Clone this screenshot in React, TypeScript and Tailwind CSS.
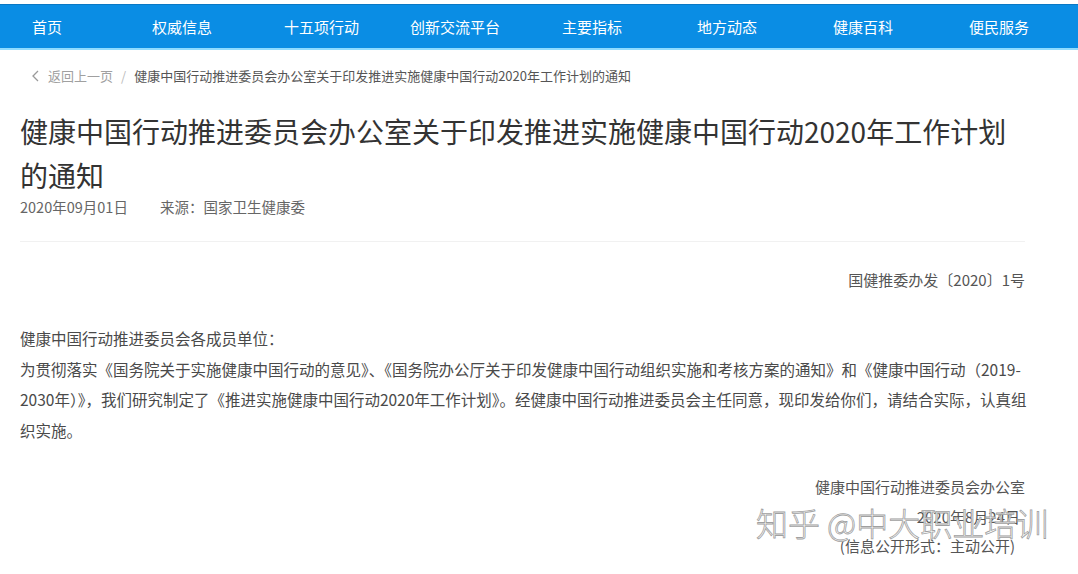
const navItems = [
    { label: '首页', cls: 'ml-[32px]' },
    { label: '权威信息', cls: 'ml-[90px]' },
    { label: '十五项行动', cls: 'ml-[72px]' },
    { label: '创新交流平台', cls: 'ml-[51px]' },
    { label: '主要指标', cls: 'ml-[62px]' },
    { label: '地方动态', cls: 'ml-[75px]' },
    { label: '健康百科', cls: 'ml-[76px]' },
    { label: '便民服务', cls: 'ml-[76px]' },
];

const font = "font-['Noto_Sans_CJK_SC','Noto_Sans',sans-serif]";

const NavBar = () => {
    return (
        <div className="w-full pt-[4px] bg-white">
            <nav className="flex flex-row items-center h-[46px] bg-[#0a8de4] border-t border-[#0a78c4] border-b-2 border-b-[#8fdcff]">
                {navItems.map((item) => (
                    <a key={item.label} href="#" className={`${item.cls} text-white text-[15px] leading-none whitespace-nowrap`}>
                        {item.label}
                    </a>
                ))}
            </nav>
        </div>
    );
};

const Breadcrumb = () => {
    return (
        <div className="flex flex-row items-center h-[20px] mt-[16px] pl-[31px] text-[13px] whitespace-nowrap">
            <svg width="9" height="12" viewBox="0 0 9 12" className="mr-[8px]">
                <path d="M7 1 L2 6 L7 11" fill="none" stroke="#9a9a9a" strokeWidth="1.3" />
            </svg>
            <a href="#" className="text-[#a0a0a0]">返回上一页</a>
            <span className="text-[#bbb] mx-[8px]">/</span>
            <span className="text-[#555]">健康中国行动推进委员会办公室关于印发推进实施健康中国行动2020年工作计划的通知</span>
        </div>
    );
};

const Article = () => {
    return (
        <article className="flex flex-col pl-[20px] pr-[53px]">
            <h1 className="mt-[23px] text-[28px] leading-[44px] text-[#333] font-normal whitespace-nowrap">
                健康中国行动推进委员会办公室关于印发推进实施健康中国行动2020年工作计划
                <br />
                的通知
            </h1>

            <div className="flex flex-row items-center h-[20px] text-[14.5px] text-[#666] whitespace-nowrap">
                <span>2020年09月01日</span>
                <span className="ml-[32px]">来源：国家卫生健康委</span>
            </div>

            <hr className="mt-[24px] w-full h-px bg-[#f1f1f1] border-0" />

            <p className="mt-[23px] text-right text-[15px] leading-[30px] text-[#555] whitespace-nowrap">
                国健推委办发〔2020〕1号
            </p>

            <div className="mt-[28px] text-[15.5px] leading-[30.5px] text-[#4a4a4a] whitespace-nowrap">
                <p>健康中国行动推进委员会各成员单位：</p>
                <p>
                    为贯彻落实《国务院关于实施健康中国行动的意见》、《国务院办公厅关于印发健康中国行动组织实施和考核方案的通知》和《健康中国行动（2019-
                    <br />
                    2030年）》，我们研究制定了《推进实施健康中国行动2020年工作计划》。经健康中国行动推进委员会主任同意，现印发给你们，请结合实际，认真组
                    <br />
                    织实施。
                </p>
            </div>

            <div className="mt-[27px] flex flex-col items-end text-[15px] leading-[29.5px] text-[#555] whitespace-nowrap">
                <p>健康中国行动推进委员会办公室</p>
                <p className="pr-[5px]">2020年8月24日</p>
                <p className="pr-[10px]">(信息公开形式：主动公开)</p>
            </div>
        </article>
    );
};

const App = () => {
    return (
        <div className={`relative w-[1078px] h-[574px] overflow-hidden bg-white ${font}`}>
            <NavBar />
            <Breadcrumb />
            <Article />
            <div className="absolute left-[756px] top-[506px] text-[32px] leading-none text-white/90 font-light [-webkit-text-stroke:0.8px_#a0a0a0] whitespace-nowrap">
                知乎 @中大职业培训
            </div>
        </div>
    );
};

export default App;
